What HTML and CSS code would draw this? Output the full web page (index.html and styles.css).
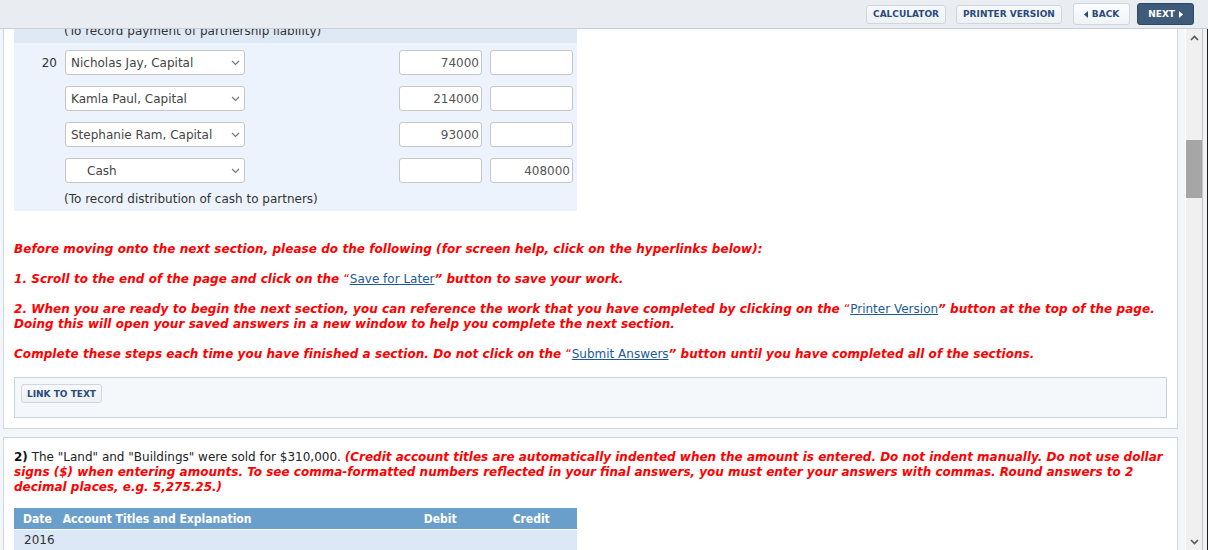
FILE: index.html
```html
<!DOCTYPE html>
<html lang="en">
<head>
  <meta charset="UTF-8" />
  <title>Question Assistance</title>
  <link rel="stylesheet" href="styles.css">
</head>
<body>

  <!-- Top toolbar -->
  <div class="topbar">
    <button class="tb-btn">CALCULATOR</button>
    <button class="tb-btn">PRINTER VERSION</button>
    <button class="tb-btn nav">
      <svg width="5" height="7" viewBox="0 0 5 7"><path d="M4 0 L0 3.5 L4 7 Z" fill="#2a4a7e"/></svg>
      BACK
    </button>
    <button class="tb-btn nav next">
      NEXT
      <svg width="5" height="7" viewBox="0 0 5 7"><path d="M1 0 L5 3.5 L1 7 Z" fill="#ffffff"/></svg>
    </button>
  </div>

  <div class="frame">
    <div class="content">

      <!-- Part 1 (scrolled) -->
      <div class="panel panel-first">
        <div class="journal">
          <div class="entry entry-prev">
            <div class="note">(To record payment of partnership liability)</div>
          </div>

          <div class="entry">
            <div class="jrow">
              <span class="num">20</span>
              <div class="select">Nicholas Jay, Capital
                <svg class="chev" width="9" height="6" viewBox="0 0 9 6"><path d="M1 1 L4.5 4.5 L8 1" fill="none" stroke="#777" stroke-width="1.2"/></svg>
              </div>
              <input class="amt" type="text" value="74000">
              <input class="amt" type="text" value="">
            </div>
            <div class="jrow">
              <span class="num"></span>
              <div class="select">Kamla Paul, Capital
                <svg class="chev" width="9" height="6" viewBox="0 0 9 6"><path d="M1 1 L4.5 4.5 L8 1" fill="none" stroke="#777" stroke-width="1.2"/></svg>
              </div>
              <input class="amt" type="text" value="214000">
              <input class="amt" type="text" value="">
            </div>
            <div class="jrow">
              <span class="num"></span>
              <div class="select">Stephanie Ram, Capital
                <svg class="chev" width="9" height="6" viewBox="0 0 9 6"><path d="M1 1 L4.5 4.5 L8 1" fill="none" stroke="#777" stroke-width="1.2"/></svg>
              </div>
              <input class="amt" type="text" value="93000">
              <input class="amt" type="text" value="">
            </div>
            <div class="jrow">
              <span class="num"></span>
              <div class="select indent">Cash
                <svg class="chev" width="9" height="6" viewBox="0 0 9 6"><path d="M1 1 L4.5 4.5 L8 1" fill="none" stroke="#777" stroke-width="1.2"/></svg>
              </div>
              <input class="amt" type="text" value="">
              <input class="amt" type="text" value="408000">
            </div>
            <div class="note note-last">(To record distribution of cash to partners)</div>
          </div>
        </div>

        <!-- Instructions -->
        <div class="instructions">
          <p>Before moving onto the next section, please do the following (for screen help, click on the hyperlinks below):</p>
          <p>1. Scroll to the end of the page and click on the <span class="q">“</span><a href="#">Save for Later</a>” button to save your work.</p>
          <p>2. When you are ready to begin the next section, you can reference the work that you have completed by clicking on the <span class="q">“</span><a href="#">Printer Version</a>” button at the top of the page.<br>Doing this will open your saved answers in a new window to help you complete the next section.</p>
          <p>Complete these steps each time you have finished a section. Do not click on the <span class="q">“</span><a href="#">Submit Answers</a>” button until you have completed all of the sections.</p>
        </div>

        <div class="linkbox">
          <button class="tb-btn">LINK TO TEXT</button>
        </div>
      </div>

      <!-- Part 2 -->
      <div class="panel panel-second">
        <p class="question"><b>2)</b> The "Land" and "Buildings" were sold for $310,000. <span class="red">(Credit account titles are automatically indented when the amount is entered. Do not indent manually. Do not use dollar<br>signs ($) when entering amounts. To see comma-formatted numbers reflected in your final answers, you must enter your answers with commas. Round answers to 2<br>decimal places, e.g. 5,275.25.)</span></p>

        <div class="jtable">
          <div class="jhead">
            <span class="c-date">Date</span>
            <span class="c-acct">Account Titles and Explanation</span>
            <span class="c-debit">Debit</span>
            <span class="c-credit">Credit</span>
          </div>
          <div class="jyear">2016</div>
        </div>
      </div>

    </div>

    <!-- Fake scrollbar of the frame -->
    <div class="scrollbar">
      <div class="sb-arrow">
        <svg width="9" height="6" viewBox="0 0 9 6"><path d="M1 5 L4.5 1.5 L8 5" fill="none" stroke="#555" stroke-width="1.6"/></svg>
      </div>
      <div class="sb-track"><div class="sb-thumb"></div></div>
      <div class="sb-arrow">
        <svg width="9" height="6" viewBox="0 0 9 6"><path d="M1 1 L4.5 4.5 L8 1" fill="none" stroke="#555" stroke-width="1.6"/></svg>
      </div>
    </div>
    <div class="edge"></div>
  </div>

</body>
</html>
```
FILE: styles.css
```css
* {
  box-sizing: border-box;
}

body {
  margin: 0;
  font-family: "DejaVu Sans", Verdana, sans-serif;
  font-size: 12px;
  color: #222;
  background: #fff;
  overflow: hidden;
}

/* Toolbar */
.topbar {
  height: 29px;
  background: #e9edf1;
  border-bottom: 1px solid #c7cfd8;
  display: flex;
  justify-content: flex-end;
  align-items: center;
  padding-right: 14px;
}

.tb-btn {
  font-family: "DejaVu Sans", Verdana, sans-serif;
  font-size: 9px;
  font-weight: bold;
  color: #2a4a7e;
  background: linear-gradient(#f7f9fb, #edf1f4);
  border: 1px solid #cfd6de;
  border-radius: 3px;
  height: 19px;
  padding: 0 6px;
  margin-left: 10px;
  display: inline-flex;
  align-items: center;
  gap: 3px;
}

.tb-btn.nav {
  height: 22px;
  padding: 0 10px;
  background: linear-gradient(#fbfcfd, #f1f4f7);
  margin-left: 11px;
}

.tb-btn.next {
  margin-left: 7px;
  background: #3e5c79;
  border-color: #2f4a64;
  color: #fff;
}

/* Frame */
.frame {
  display: flex;
  height: 521px;
  overflow: hidden;
}

.content {
  flex: 1;
  background: #f3f6f9;
  padding: 0 7px 0 3px;
  overflow: hidden;
}

.panel {
  background: #fff;
  border: 1px solid #cfd7e2;
  padding: 10px;
  margin-top: 8px;
}

.panel-first {
  margin-top: -10px;
  padding-top: 0;
  border-top: none;
}

.panel-second {
  padding-top: 12px;
}

/* Journal entries */
.journal {
  width: 563px;
}

.entry {
  background: #ecf3fd;
  padding: 7px 0 4px;
}

.entry-prev {
  background: #dfe9f6;
  padding: 5px 0 4px;
}

.note {
  line-height: 15px;
  padding-left: 50px;
  color: #333;
}

.note-last {
  margin-top: 9px;
}

.jrow {
  display: flex;
  align-items: center;
  height: 25px;
  margin-bottom: 11px;
}

.jrow:nth-child(4) {
  margin-bottom: 0;
}

.num {
  width: 48px;
  text-align: right;
  padding-right: 5px;
  color: #333;
}

.select {
  width: 180px;
  height: 25px;
  margin-left: 3px;
  background: #fff;
  border: 1px solid #c6c6c6;
  border-radius: 3px;
  padding: 0 0 0 5px;
  display: flex;
  align-items: center;
  justify-content: space-between;
  color: #444;
}

.select.indent {
  padding-left: 21px;
}

.chev {
  margin-right: 4px;
}

.amt {
  width: 83px;
  height: 25px;
  border: 1px solid #c6c6c6;
  border-radius: 3px;
  font-family: "DejaVu Sans", Verdana, sans-serif;
  font-size: 12px;
  color: #555;
  text-align: right;
  padding: 0 2px;
  margin-left: 8px;
  background: #fff;
}

.select + .amt {
  margin-left: 154px;
}

/* Red instructions */
.instructions {
  padding-top: 31px;
}

.instructions p,
.red {
  color: #f00;
  font-weight: bold;
  font-style: italic;
}

.instructions p {
  margin: 0 0 15px;
  line-height: 15px;
  letter-spacing: 0.05px;
}

.instructions a {
  color: #1b5a96;
  font-weight: normal;
  font-style: normal;
  letter-spacing: 0;
}

.q {
  font-style: normal;
  font-weight: normal;
}

.linkbox {
  margin-top: 14px;
  background: #f5f8fb;
  border: 1px solid #c9d3df;
  padding: 6px 6px 14px;
}

.linkbox .tb-btn {
  margin-left: 0;
  padding: 0 5px;
}

/* Part 2 */
.question {
  margin: 0;
  line-height: 15px;
  color: #222;
  white-space: nowrap;
}

.question b {
  color: #111;
}

.jtable {
  width: 563px;
  margin-top: 13px;
}

.jhead {
  height: 21px;
  background: #6a9fcb;
  color: #fff;
  font-family: "DejaVu Sans Condensed", "DejaVu Sans", sans-serif;
  font-weight: bold;
  display: flex;
  align-items: center;
}

.c-date {
  margin-left: 9px;
}

.c-acct {
  margin-left: 11px;
  width: 350px;
}

.c-debit {
  margin-left: 11px;
}

.c-credit {
  margin-left: 56px;
}

.jyear {
  height: 20px;
  margin-top: 1px;
  background: #dde8f7;
  line-height: 20px;
  padding-left: 10px;
  color: #333;
}

/* Scrollbar */
.scrollbar {
  width: 16px;
  margin-left: 1px;
  background: #f0f0f0;
  display: flex;
  flex-direction: column;
}

.sb-arrow {
  height: 17px;
  display: flex;
  align-items: center;
  justify-content: center;
}

.sb-track {
  flex: 1;
}

.sb-thumb {
  height: 58px;
  margin-top: 94px;
  background: #a6a6a6;
}

.edge {
  width: 6px;
  background: #f0f2f4;
  border-left: 1px solid #c4c4c4;
  border-right: 1px solid #1e1e1e;
}
```
